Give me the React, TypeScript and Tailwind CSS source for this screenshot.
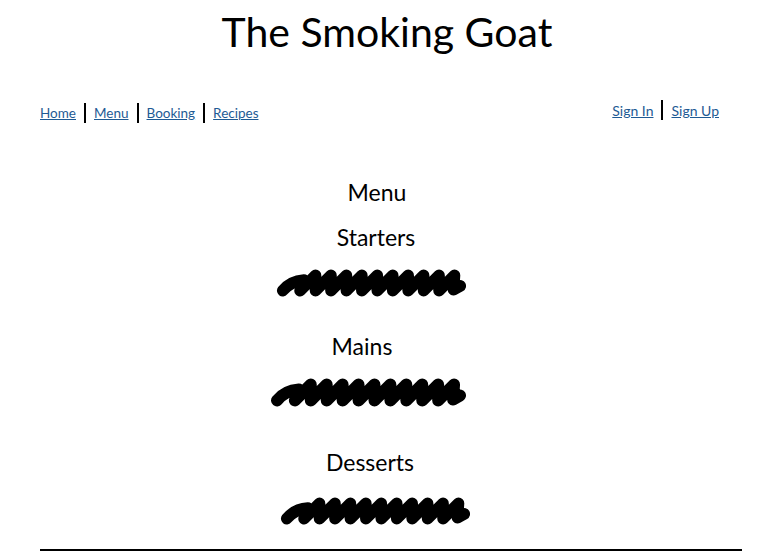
import React from 'react';

function Scribble({ className }: { className?: string }) {
  // thick hand-drawn squiggle standing in for menu text
  const pts: string[] = ['M8 23', 'Q 16 13, 30 12'];
  let x = 30;
  for (let i = 0; i < 10; i++) {
    pts.push(`L ${x - 4} 23`);
    pts.push(`L ${x + 12} 7`);
    x += 16;
  }
  pts.push(`L ${x - 5} 22`, `L ${x + 2} 18`);
  return (
    <svg viewBox="0 0 200 30" className={className} fill="none">
      <path
        d={pts.join(' ')}
        stroke="#000"
        strokeWidth={12}
        strokeLinecap="round"
        strokeLinejoin="round"
      />
    </svg>
  );
}

export default function App() {
  const left = ['Home', 'Menu', 'Booking', 'Recipes'];
  const right = ['Sign In', 'Sign Up'];

  return (
    <div className="w-[760px] h-[554px] bg-white text-black font-['Lato',sans-serif] overflow-hidden">
      {/* Title */}
      <h1 className="text-center text-[41px] leading-none pt-[11px] ml-[14px]">The Smoking Goat</h1>

      {/* Nav */}
      <nav className="flex justify-between pl-10 pr-[41px] mt-[51px]">
        <ul className="flex items-center">
          {left.map((l, i) => (
            <li key={l} className="flex items-center">
              {i > 0 && <span className="w-[2px] h-[20px] bg-black mx-[8px]" />}
              <a href="#" className="text-[13.5px] text-[#1e5a94] underline">{l}</a>
            </li>
          ))}
        </ul>
        <ul className="flex items-center -mt-[6px]">
          {right.map((l, i) => (
            <li key={l} className="flex items-center">
              {i > 0 && <span className="w-[2px] h-[20px] bg-black mx-[8px]" />}
              <a href="#" className="text-[14px] text-[#1e5a94] underline">{l}</a>
            </li>
          ))}
        </ul>
      </nav>

      {/* Menu */}
      <main className="flex flex-col items-center mt-[58px]">
        <h2 className="text-[23px] leading-none ml-[-6px]">Menu</h2>
        <h3 className="text-[23px] leading-none mt-[22px] ml-[-8px]">Starters</h3>
        <Scribble className="w-[193px] h-[30px] mt-[19px] ml-[-17px]" />
        <h3 className="text-[23px] leading-none mt-[37px] ml-[-36px]">Mains</h3>
        <Scribble className="w-[199px] h-[31px] mt-[19px] ml-[-23px]" />
        <h3 className="text-[23px] leading-none mt-[43px] ml-[-20px]">Desserts</h3>
        <Scribble className="w-[193px] h-[32px] mt-[21px] ml-[-9px]" />
      </main>

      {/* Footer rule */}
      <div className="ml-[40px] mr-[18px] h-[2px] bg-black mt-[22px]" />
    </div>
  );
}
